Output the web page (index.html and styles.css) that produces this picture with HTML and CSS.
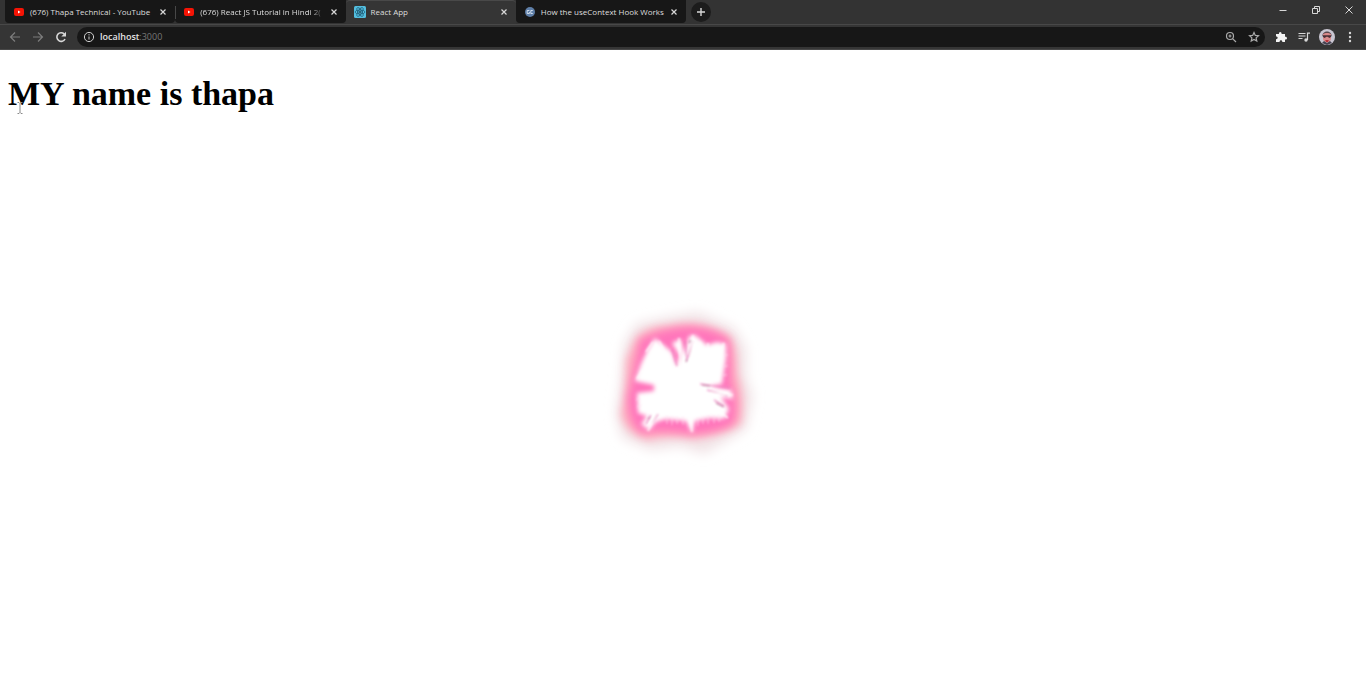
FILE: index.html
```html
<!DOCTYPE html>
<html lang="en">
<head>
<meta charset="utf-8">
<title>React App</title>
<link rel="stylesheet" href="styles.css">
</head>
<body>
<header class="browser">
  <div class="tabstrip">
    <nav class="tabs" aria-label="Tabs">
      <div class="tab">
        <svg class="favicon" viewBox="0 0 12 12"><rect x="1" y="2" width="10" height="8" rx="2" fill="#f51405"/><path d="M5 4.500l2.500 1.500L5 7.500z" fill="#fff"/></svg>
        <span class="title">(676) Thapa Technical - YouTube</span>
        <button class="close" aria-label="Close tab"><svg viewBox="0 0 8 8"><path d="M1.5 1.5l5 5M6.5 1.5l-5 5"/></svg></button>
      </div>
      <div class="tab divided">
        <svg class="favicon" viewBox="0 0 12 12"><rect x="1" y="2" width="10" height="8" rx="2" fill="#f51405"/><path d="M5 4.500l2.500 1.500L5 7.500z" fill="#fff"/></svg>
        <span class="title faded">(676) React JS Tutorial in Hindi 2(</span>
        <button class="close" aria-label="Close tab"><svg viewBox="0 0 8 8"><path d="M1.5 1.5l5 5M6.5 1.5l-5 5"/></svg></button>
      </div>
      <div class="tab active">
        <svg class="favicon" viewBox="0 0 12 12"><rect width="12" height="12" rx="1.5" fill="#54bfe0"/><g fill="none" stroke="#20607a" stroke-width=".8"><ellipse cx="6" cy="6" rx="5" ry="2"/><ellipse cx="6" cy="6" rx="5" ry="2" transform="rotate(60 6 6)"/><ellipse cx="6" cy="6" rx="5" ry="2" transform="rotate(120 6 6)"/></g><circle cx="6" cy="6" r="1" fill="#20485a"/></svg>
        <span class="title">React App</span>
        <button class="close" aria-label="Close tab"><svg viewBox="0 0 8 8"><path d="M1.5 1.5l5 5M6.5 1.5l-5 5"/></svg></button>
      </div>
      <div class="tab">
        <svg class="favicon" viewBox="0 0 12 12"><circle cx="6" cy="6" r="5" fill="#5f7fa8"/><path d="M5.4 4.5H3.2v3h2.200V6M8.800 4.500H6.800v3h2" fill="none" stroke="#dbe6f2" stroke-width=".9"/></svg>
        <span class="title">How the useContext Hook Works</span>
        <button class="close" aria-label="Close tab"><svg viewBox="0 0 8 8"><path d="M1.5 1.5l5 5M6.5 1.5l-5 5"/></svg></button>
      </div>
    </nav>
    <button class="newtab" aria-label="New tab"><svg viewBox="0 0 20 20"><path d="M10 6v8M6 10h8"/></svg></button>
    <div class="window-controls">
      <button aria-label="Minimize"><svg viewBox="0 0 12 12"><path d="M2.5 6.5h7"/></svg></button>
      <button aria-label="Restore"><svg viewBox="0 0 12 12"><path d="M2.5 4.5h5v5h-5zM4.500 4V2.500h5v5H8"/></svg></button>
      <button aria-label="Close window"><svg viewBox="0 0 12 12"><path d="M2.500 2.500l7 7M9.500 2.500l-7 7"/></svg></button>
    </div>
  </div>
  <div class="toolbar">
    <button class="tool dim" aria-label="Back"><svg viewBox="0 0 14 14"><path d="M12 7H2.500M7 2.500L2.500 7 7 11.500"/></svg></button>
    <button class="tool dim" aria-label="Forward"><svg viewBox="0 0 14 14"><path d="M2 7h9.500M7 2.500L11.500 7 7 11.500"/></svg></button>
    <button class="tool reload" aria-label="Reload"><svg viewBox="0 0 14 14"><path d="M11 9A4.300 4.300 0 1 1 10.200 4"/><path class="solid" d="M12 1.800v4.700H7.300z"/></svg></button>
    <div class="address">
      <svg class="info" viewBox="0 0 12 12"><circle cx="6" cy="6" r="4.600"/><path d="M6 5.500v3M6 3.200v1.200"/></svg>
      <a class="url" href="#">localhost<span>:3000</span></a>
      <button class="tool" aria-label="Zoom"><svg viewBox="0 0 14 14"><circle cx="6" cy="6" r="3.500"/><path d="M8.800 8.800L12 12M4.500 6h3M6 4.500v3"/></svg></button>
      <button class="tool" aria-label="Bookmark"><svg viewBox="0 0 14 14"><path d="M7 2.500l1.300 2.900 3.200.3-2.400 2.200.7 3.200L7 9.500l-2.800 1.600.7-3.200-2.400-2.200 3.200-.3z"/></svg></button>
    </div>
    <button class="tool bright" aria-label="Extensions"><svg viewBox="0 0 14 14"><path class="solid" d="M2 4h3c-.6-2.800 3-2.800 2.600 0H11v2.700c2.700-.3 2.700 3.100 0 2.800V12H8.300c.2-2.200-2.900-2.200-2.700 0H2V9.300c2.200.1 2.200-2.900 0-2.700z"/></svg></button>
    <button class="tool" aria-label="Media"><svg viewBox="0 0 14 14"><path d="M1.500 3.500h7M1.500 6h7M1.500 8.500h4M10.500 10V3.200H13"/><circle class="solid" cx="9" cy="10" r="1.700"/></svg></button>
    <button class="tool avatar" aria-label="Profile"><svg viewBox="0 0 16 16"><circle cx="8" cy="8" r="8" fill="#c9c6d2"/><path d="M3.500 7C3 1 13 1 12.500 7z" fill="#5a4a50"/><path d="M4 5c2-1.500 6-1.500 8 0v5c-1 4.500-7 4.500-8 0z" fill="#d98a8b"/><path d="M3.800 6.300h8.400v1.400l-1.700 1.200-2-1.200h-1l-2 1.200-1.700-1.200z" fill="#4a3038"/><path d="M6 11.500q2-1 4 0l-2 2z" fill="#b3262f"/><path d="M3 14l2-2 3 2 3-2 2 2-5 2z" fill="#454250"/></svg></button>
    <button class="tool" aria-label="Menu"><svg viewBox="0 0 14 14"><g class="solid"><circle cx="7" cy="3" r="1.200"/><circle cx="7" cy="7" r="1.200"/><circle cx="7" cy="11" r="1.200"/></g></svg></button>
  </div>
</header>
<main class="page">
  <h1>MY name is thapa</h1>
  <svg class="cursor" viewBox="0 0 8 14"><path d="M1.500 1.500h1.500l1 1 1-1h1.500M4 2.500v9M1.500 12.500h1.500l1-1 1 1h1.500"/></svg>
  <svg class="burst" viewBox="0 0 190 190" aria-hidden="true">
    <defs>
      <filter id="haze" x="-20%" y="-20%" width="140%" height="140%"><feGaussianBlur stdDeviation="6"/></filter>
      <filter id="glow" x="-20%" y="-20%" width="140%" height="140%"><feGaussianBlur stdDeviation="4"/></filter>
      <filter id="soft" x="-20%" y="-20%" width="140%" height="140%"><feGaussianBlur stdDeviation="2.200"/></filter>
      <filter id="ray" x="-20%" y="-20%" width="140%" height="140%"><feGaussianBlur stdDeviation=".9"/></filter>
    </defs>
    <path filter="url(#haze)" fill="#f1e3e6" d="M46 34L78 27 108 22 144 38 156 58 156 87 163 106 156 139 138 150 114 164 90 156 61 160 32 148 26 124 31 90 34 54z"/>
    <path filter="url(#glow)" fill="#ffabbd" d="M46 48Q58 36 78 36 108 28 138 45 147 53 147 83 155 105 151 133 140 143 104 149 80 144 58 150 35 143 31 124 36 105 36 70z"/>
    <path filter="url(#glow)" fill="#ff75bb" d="M50 50Q72 38 99 37 125 38 139 50 141 65 141 92 149 111 144 132 136 141 101 144 75 139 52 143 38 134 38 108 42 76z"/>
    <path filter="url(#soft)" fill="#fff" d="M65 48L82 62 87 76 90 66 82 53 91 49 94 65 99 46 105 45 110 49 117 55 127 52 136 54 136 68 132 94 120 96 141 100 143 109 131 107 139 119 134 129 120 128 105 131 102 143 96 131 76 129 66 132 59 140 51 134 57 126 48 123 47 103 64 101 64 95 45 91 51 74 58 59z"/>
    <g filter="url(#ray)" fill="none" stroke-width="1.600">
      <path stroke="#e867b3" stroke-opacity=".6" d="M97 71l-2-20M98 68l5-17M87 76l-5-17M110 94l30 4M117 100l21 6M124 110l10 6M61 125l-5 9M68 124l-6 9"/>
      <path stroke="#fff" stroke-opacity=".9" d="M91 85l-2-37M101 75l2-30M125 75l9-22M121 103l22 2M118 113l20 15M67 121l-9 20M100 127l2 15M53 80l-6 9M56 62l7-10M73 59l-4-8M110 52v8M118 53v8"/>
      <path stroke="#ffe6f5" stroke-opacity=".7" stroke-width="1" d="M77 125v9M82 126v9M87 126v8M93 126v9M108 127v9M113 126v8M118 125v9M124 125v8M129 124v8M50 108l-4 2M52 115l-5 2M134 65h4M133 76h5M132 85h5"/>
      <path stroke="#b36a91" stroke-opacity=".65" d="M96 72l1-3M112 95l8 1M126 113l8 4M58 129l2-2M99 53l2-3"/>
    </g>
  </svg>
</main>
</body>
</html>
```
FILE: styles.css
```css
* { box-sizing: border-box; }
html, body { height: 100%; }
body {
  margin: 0;
  display: flex;
  flex-direction: column;
  background: #fff;
  overflow: hidden;
}
button {
  display: grid;
  place-items: center;
  flex: none;
  margin: 0;
  padding: 0;
  border: 0;
  background: none;
  color: #d8d8d8;
}
svg { display: block; flex: none; }
button svg, .info { fill: none; stroke: currentColor; }
button .solid { fill: currentColor; stroke: none; }

.browser {
  flex: none;
  background: #353535;
  font-family: "Open Sans", "Noto Sans", sans-serif;
  font-size: 8px;
  line-height: 12px;
}
.tabstrip {
  display: flex;
  height: 24px;
  padding-left: 5px;
  background: #333;
}
.tabs { display: flex; flex: 0 1 681px; min-width: 0; }
.tab {
  display: flex;
  align-items: center;
  flex: 1 1 0;
  min-width: 0;
  height: 23px;
  padding: 0 8px;
  gap: 5px;
  background: #171717;
  color: #dedede;
  border-radius: 0 0 4px 4px;
}
.tab.divided { position: relative; }
.tab.divided::before {
  content: "";
  position: absolute;
  left: 0;
  top: 6px;
  width: 1px;
  height: 13px;
  background: #484848;
}
.tab.active {
  height: 24px;
  padding-bottom: 2px;
  background: #353535;
  border-top: 1px solid #494949;
  border-radius: 4px 4px 0 0;
}
.favicon { width: 12px; height: 12px; }
.title {
  flex: 1;
  min-width: 0;
  white-space: nowrap;
}
.faded {
  -webkit-mask-image: linear-gradient(to right, #000 88%, transparent);
  mask-image: linear-gradient(to right, #000 88%, transparent);
}
.close svg { width: 8px; height: 8px; stroke-width: 1.2; }
.newtab {
  width: 20px;
  height: 20px;
  margin: 2px 0 0 5px;
  border-radius: 50%;
  background: #1c1c1c;
}
.newtab svg { width: 20px; height: 20px; stroke-width: 1.4; }
.window-controls { display: flex; height: 20px; margin-left: auto; padding-right: 1px; }
.window-controls button { width: 33px; }
.window-controls svg { width: 12px; height: 12px; }

.toolbar {
  display: flex;
  align-items: center;
  height: 26px;
  padding: 0 5px 0 3px;
  border-top: 1px solid #484848;
  border-bottom: 1px solid #484848;
}
.tool { width: 23px; height: 20px; }
.tool svg { width: 14px; height: 14px; stroke-width: 1.2; }
.dim { color: #7d7d7d; }
.bright { color: #f4f4f4; }
.reload svg { stroke-width: 1.6; }
.address {
  display: flex;
  align-items: center;
  flex: 1;
  min-width: 0;
  height: 20px;
  margin: 0 4px 0 5px;
  padding-left: 6px;
  border-radius: 10px;
  background: #171717;
}
.address .tool { color: #aaa; }
.info { width: 12px; height: 12px; color: #d0d0d0; }
.url {
  flex: 1;
  margin-left: 5px;
  color: #e3e3e3;
  font-size: 9px;
  font-weight: 600;
  text-decoration: none;
}
.url span { color: #777; font-weight: 400; }
.avatar svg { width: 16px; height: 16px; stroke: none; }

.page {
  position: relative;
  flex: 1;
  min-height: 0;
  padding: 24px 8px;
}
h1 {
  margin: 0;
  color: #000;
  font: bold 34px/40px "Liberation Serif", "Times New Roman", serif;
}
.cursor {
  position: absolute;
  left: 16px;
  top: 51px;
  width: 8px;
  height: 14px;
  fill: none;
  stroke: #888;
}
.burst {
  position: absolute;
  left: calc(50% - 93px);
  top: 240px;
  width: 190px;
  height: 190px;
}
```
